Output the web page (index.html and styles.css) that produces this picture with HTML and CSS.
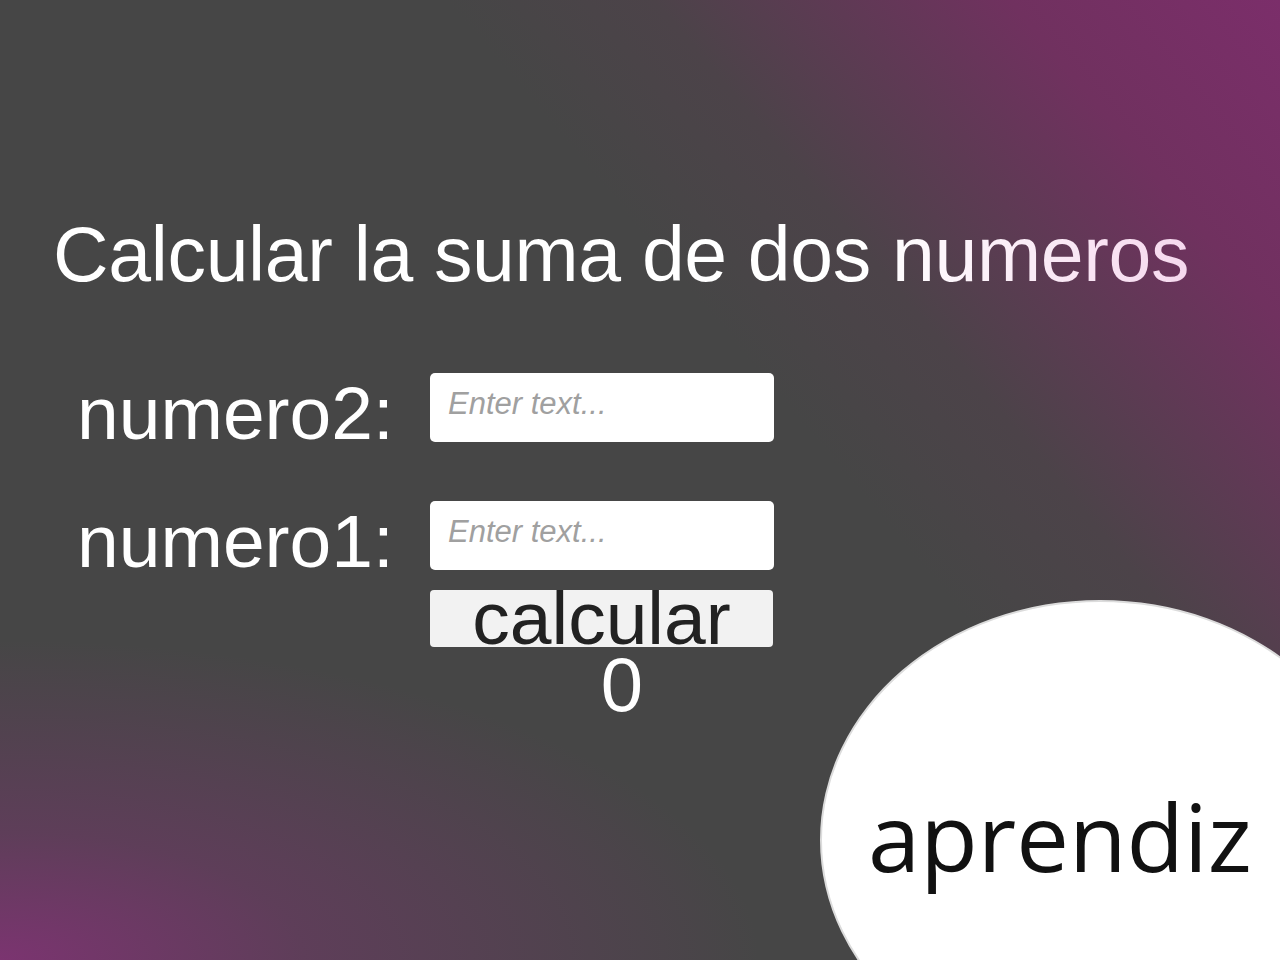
FILE: index.html
```html
<!DOCTYPE html>
<html lang="es">
<head>
<meta charset="utf-8">
<title>Calcular la suma de dos numeros</title>
<link rel="stylesheet" href="styles.css">
</head>
<body>
<main class="screen">
  <h1 class="title">Calcular la suma de dos numeros</h1>
  <form class="form">
    <div class="row">
      <label class="label" for="n2">numero2:</label>
      <input class="field" id="n2" type="text" placeholder="Enter text...">
    </div>
    <div class="row">
      <label class="label" for="n1">numero1:</label>
      <input class="field" id="n1" type="text" placeholder="Enter text...">
    </div>
    <div class="actions">
      <button class="btn" type="button">calcular</button>
      <div class="result">0</div>
    </div>
  </form>
  <div class="badge"><span class="badge-text">aprendiz</span></div>
</main>
</body>
</html>
```
FILE: styles.css
```css
html, body {
  margin: 0;
  padding: 0;
}

body {
  width: 1280px;
  height: 960px;
  overflow: hidden;
  font-family: "Liberation Sans", Arial, sans-serif;
  background:
    radial-gradient(ellipse 760px 320px at 0% 100%, rgba(123, 52, 112, 1) 0%, rgba(123, 52, 112, 0.45) 40%, rgba(123, 52, 112, 0) 100%),
    linear-gradient(230deg, #7b2e6a 0%, #70315f 13%, #4c4349 30%, #464646 40%, #464646 100%);
}

.screen {
  position: relative;
  width: 1280px;
  height: 960px;
  box-sizing: border-box;
  padding: 216px 0 0 53px;
  overflow: hidden;
}

.title {
  margin: 0 0 80px;
  font-size: 77px;
  line-height: 77px;
  font-weight: normal;
  letter-spacing: -0.35px;
  white-space: nowrap;
  display: inline-block;
  color: #fff;
  background: linear-gradient(90deg, #ffffff 0%, #ffffff 72%, #f6d8ee 100%);
  -webkit-background-clip: text;
  background-clip: text;
  -webkit-text-fill-color: transparent;
}

.form {
  margin: 0 0 0 24px;
  display: flex;
  flex-direction: column;
}

.row {
  display: flex;
  align-items: flex-start;
  height: 69px;
}

.row + .row {
  margin-top: 59px;
}

.label {
  width: 353px;
  flex: none;
  font-size: 75px;
  line-height: 69px;
  padding-top: 6px;
  color: #fff;
  white-space: nowrap;
}

.field {
  width: 344px;
  height: 69px;
  box-sizing: border-box;
  border: none;
  border-radius: 5px;
  background: #fff;
  padding: 0 18px 8px;
  font-family: "Liberation Sans", Arial, sans-serif;
  font-style: italic;
  font-size: 31px;
  color: #333;
  outline: none;
  margin: 0;
}

.field::placeholder {
  color: #a0a0a0;
}

.actions {
  margin: 20px 0 0 353px;
  width: 344px;
}

.btn {
  display: block;
  width: 343px;
  height: 57px;
  box-sizing: border-box;
  margin: 0;
  border: none;
  border-radius: 4px;
  background: #f2f2f2;
  color: #222;
  font-family: "Liberation Sans", Arial, sans-serif;
  font-size: 75px;
  line-height: 57px;
  padding: 0;
  overflow: visible;
}

.result {
  padding-left: 40px;
  text-align: center;
  font-size: 76px;
  line-height: 76px;
  color: #fff;
}

.badge {
  position: absolute;
  left: 820px;
  top: 600px;
  width: 560px;
  height: 480px;
  box-sizing: border-box;
  border: 2px solid #dcdcdc;
  border-radius: 50%;
  background: #fff;
  padding: 187px 0 0 46px;
}

.badge-text {
  display: block;
  font-family: "Open Sans", "Noto Sans", sans-serif;
  font-size: 94px;
  line-height: 94px;
  color: #111;
}
```
